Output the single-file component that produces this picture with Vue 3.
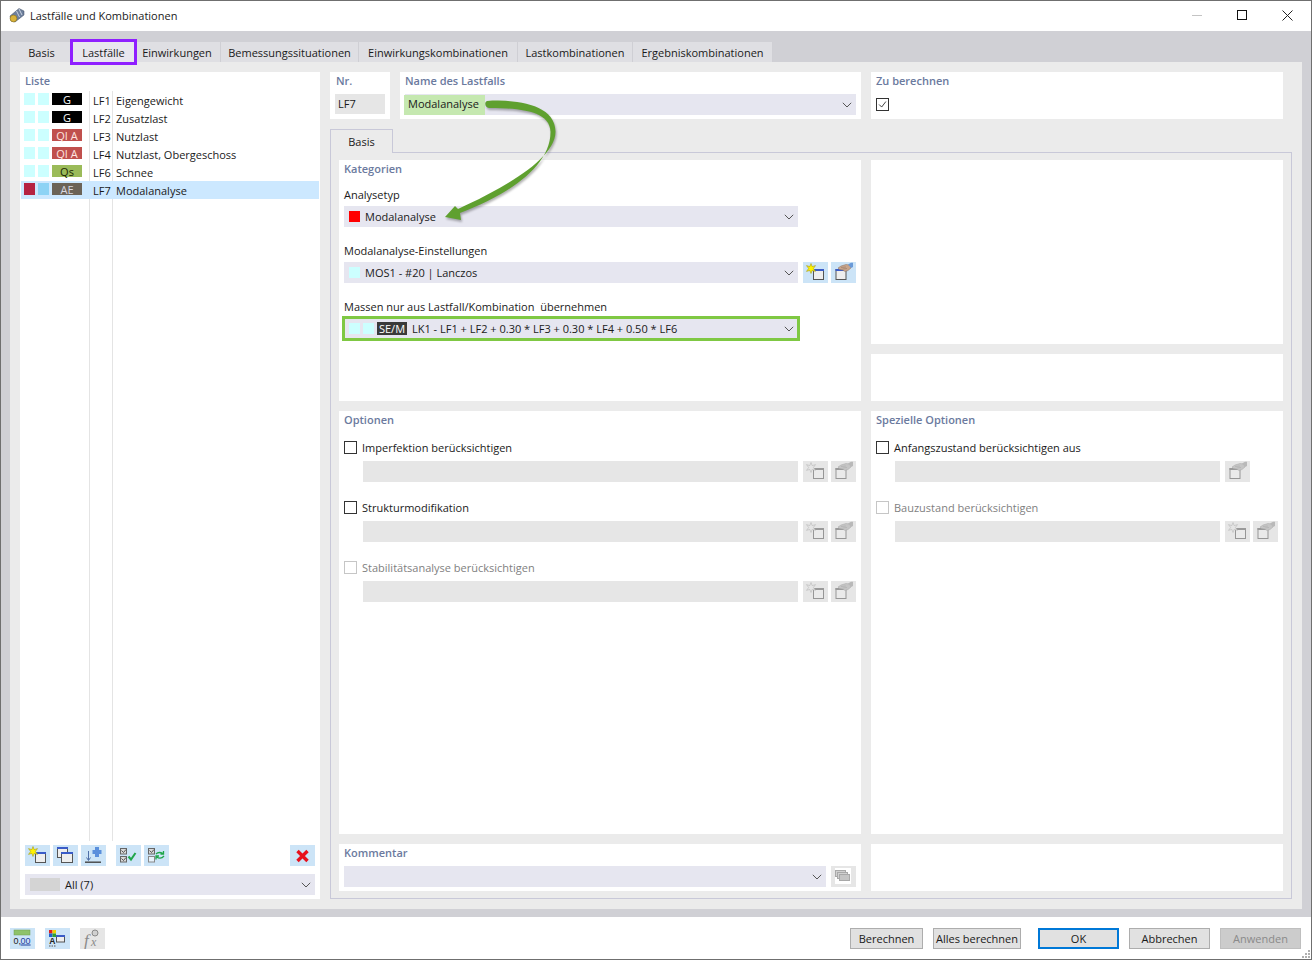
<script setup>
const tabs = [
  { label: "Basis", width: 63 },
  { label: "Lastfälle", width: 61, active: true },
  { label: "Einwirkungen", width: 87 },
  { label: "Bemessungssituationen", width: 138 },
  { label: "Einwirkungskombinationen", width: 159 },
  { label: "Lastkombinationen", width: 115 },
  { label: "Ergebniskombinationen", width: 140 },
];

const cases = [
  { a: "#ccffff", b: "#ccffff", code: "G", bg: "#000000", fg: "#ffffff", nr: "LF1", name: "Eigengewicht" },
  { a: "#ccffff", b: "#ccffff", code: "G", bg: "#000000", fg: "#ffffff", nr: "LF2", name: "Zusatzlast" },
  { a: "#ccffff", b: "#ccffff", code: "QI A", bg: "#c0504d", fg: "#ffe6e0", nr: "LF3", name: "Nutzlast" },
  { a: "#ccffff", b: "#ccffff", code: "QI A", bg: "#c0504d", fg: "#ffe6e0", nr: "LF4", name: "Nutzlast, Obergeschoss" },
  { a: "#ccffff", b: "#ccffff", code: "Qs", bg: "#9bbb59", fg: "#1a2600", nr: "LF6", name: "Schnee" },
  { a: "#b52242", b: "#8dd3f5", code: "AE", bg: "#6b6357", fg: "#d8d8e0", nr: "LF7", name: "Modalanalyse", selected: true },
];

const listTools = ["new", "copy", "import"];
const checkTools = ["check", "swap"];

const options = [
  { label: "Imperfektion berücksichtigen", icons: ["new", "edit"] },
  { label: "Strukturmodifikation", icons: ["new", "edit"] },
  { label: "Stabilitätsanalyse berücksichtigen", icons: ["new", "edit"], disabled: true },
];

const specials = [
  { label: "Anfangszustand berücksichtigen aus", icons: ["edit"] },
  { label: "Bauzustand berücksichtigen", icons: ["new", "edit"], disabled: true },
];

const footerButtons = [
  { label: "Berechnen", width: 73, gap: 10 },
  { label: "Alles berechnen", width: 88, gap: 17 },
  { label: "OK", width: 81, gap: 10, primary: true },
  { label: "Abbrechen", width: 81, gap: 10 },
  { label: "Anwenden", width: 81, gap: 0, disabled: true },
];
</script>

<template>
  <div class="window">
    <!-- gemeinsame Icons -->
    <svg class="defs" width="0" height="0">
      <symbol id="i-new" viewBox="0 0 25 21">
        <rect x="10.5" y="7.5" width="10" height="10" fill="#eeeeee" stroke="#555" />
        <rect x="10" y="7" width="11" height="2" fill="#3a5cc8" />
        <polygon points="8,1.5 9.2,4.6 12.5,3.6 10.4,6.5 12.5,9.4 9.2,8.4 8,11.5 6.8,8.4 3.5,9.4 5.6,6.5 3.5,3.6 6.8,4.6" fill="#fff200" stroke="#a39a20" stroke-width=".6" />
      </symbol>
      <symbol id="i-edit" viewBox="0 0 25 21">
        <rect x="5" y="7.5" width="10" height="10" fill="#eeeeee" stroke="#555" />
        <rect x="4.5" y="7" width="11" height="2" fill="#3a5cc8" />
        <path d="M7 6 L10 4 L15 2.5 L19 3 L20 6 L17 8.5 L14 9.5 L11.5 8 L8.5 7.5 Z" fill="#c8a58c" stroke="#8b6f5d" stroke-width=".5" />
        <path d="M10 5.5 L15 5 M11.5 7 L16 6.5" stroke="#8b6f5d" stroke-width=".5" fill="none" />
        <path d="M17 2.5 L20 .8 L22 .8 L22 5 L20 6 Z" fill="#6a9ad8" />
      </symbol>
      <symbol id="i-copy" viewBox="0 0 25 21">
        <rect x="4.5" y="2.5" width="10" height="10" fill="#eeeeee" stroke="#555" />
        <rect x="4" y="2" width="11" height="2" fill="#3a5cc8" />
        <rect x="8.5" y="7.5" width="11" height="10" fill="#eeeeee" stroke="#555" />
        <rect x="8" y="7" width="12" height="2" fill="#3a5cc8" />
      </symbol>
      <symbol id="i-import" viewBox="0 0 25 21">
        <path d="M11.5 5 H14 V2 H18 V5 H20.5 V9 H18 V12 H14 V9 H11.5 Z" fill="#5a8fdc" />
        <path d="M7.5 6 V15 M5.5 12.5 L7.5 15.5 L9.5 12.5" fill="none" stroke="#4f6fa8" stroke-width="1" />
        <rect x="4" y="16.5" width="16" height="1.4" fill="#444" />
      </symbol>
      <symbol id="i-check" viewBox="0 0 25 21">
        <rect x="4.5" y="3.5" width="6" height="5.5" fill="#d8d8d8" stroke="#666" />
        <rect x="4.5" y="11.5" width="6" height="5.5" fill="#d8d8d8" stroke="#666" />
        <path d="M5.5 5.5 L7.5 7.5 L10 4.5 M5.5 13.5 L7.5 15.5 L10 12.5" fill="none" stroke="#333" stroke-width=".8" />
        <path d="M12.5 11.5 L15 14.5 L19.5 8" fill="none" stroke="#1fa64a" stroke-width="2" />
      </symbol>
      <symbol id="i-swap" viewBox="0 0 25 21">
        <rect x="4.5" y="3.5" width="6" height="5.5" fill="#d8d8d8" stroke="#666" />
        <rect x="4.5" y="11.5" width="6" height="5.5" fill="#e6f2fb" stroke="#888" />
        <path d="M5.5 5.5 L7.5 7.5 L10 4.5" fill="none" stroke="#333" stroke-width=".8" />
        <path d="M12 9 C14 7 16 7 19 8.5 M19.5 6 V9 H16.5" fill="none" stroke="#1fa64a" stroke-width="1.3" />
        <path d="M20 11 C18 13.5 15 13.5 12.5 12 M12 14.5 V11 H15" fill="none" stroke="#1fa64a" stroke-width="1.3" />
      </symbol>
      <symbol id="i-delete" viewBox="0 0 25 21">
        <path d="M7.5 6 L17.5 16 M17.5 6 L7.5 16" fill="none" stroke="#e8101c" stroke-width="3.4" />
      </symbol>
      <symbol id="i-stack" viewBox="0 0 25 21">
        <rect x="4" y="2" width="16" height="16" fill="#fff" />
        <rect x="4.5" y="4.5" width="10" height="6" fill="#d0d0d0" stroke="#a8a8a8" />
        <rect x="6.5" y="6.5" width="10" height="6" fill="#d0d0d0" stroke="#a8a8a8" />
        <rect x="8.5" y="8.5" width="10" height="6" fill="#c4c4c4" stroke="#a8a8a8" />
      </symbol>
      <symbol id="i-chev" viewBox="0 0 10 6">
        <path d="M.8 .8 L5 5 L9.2 .8" fill="none" stroke="#555" stroke-width="1" />
      </symbol>
    </svg>

    <header class="titlebar">
      <svg class="app-icon" viewBox="0 0 16 16">
        <path d="M1 9 L10 1.5 L15 4 L15 8 L6 15 L2 14 Z" fill="#6d7f9c" stroke="#3d4a60" stroke-width=".5" />
        <path d="M10 2 L13 8 M7.5 4 L10.5 10" stroke="#c9d2e0" stroke-width="1" />
        <circle cx="4.5" cy="11.5" r="3.4" fill="#d9b23a" stroke="#7a6416" stroke-width=".5" />
      </svg>
      <span class="title">Lastfälle und Kombinationen</span>
      <div class="win-controls">
        <span class="win-min"></span>
        <span class="win-max"></span>
        <svg class="win-close" viewBox="0 0 11 11"><path d="M.5 .5 L10.5 10.5 M10.5 .5 L.5 10.5" stroke="#222" stroke-width="1" /></svg>
      </div>
    </header>

    <div class="body">
      <nav class="tabs">
        <div
          v-for="tab in tabs"
          :key="tab.label"
          class="tab"
          :class="{ active: tab.active }"
          :style="{ width: tab.width + 'px' }"
        >
          {{ tab.label }}
        </div>
      </nav>

      <main class="sheet">
        <!-- Liste der Lastfälle -->
        <aside class="card list-card">
          <div class="head">Liste</div>
          <div class="list">
            <div v-for="item in cases" :key="item.nr" class="row" :class="{ selected: item.selected }">
              <span class="sq" :style="{ background: item.a }"></span>
              <span class="sq" :style="{ background: item.b }"></span>
              <span class="code" :style="{ background: item.bg, color: item.fg }">{{ item.code }}</span>
              <span class="nr">{{ item.nr }}</span>
              <span class="name">{{ item.name }}</span>
            </div>
          </div>
          <div class="list-tools">
            <span v-for="ic in listTools" :key="ic" class="tool"><svg><use :href="'#i-' + ic" /></svg></span>
            <span class="tool-gap"></span>
            <span v-for="ic in checkTools" :key="ic" class="tool"><svg><use :href="'#i-' + ic" /></svg></span>
            <span class="tool tool-end"><svg><use href="#i-delete" /></svg></span>
          </div>
          <div class="combo list-filter">
            <span class="filter-chip"></span>
            <span>All (7)</span>
            <svg class="chev"><use href="#i-chev" /></svg>
          </div>
        </aside>

        <section class="detail">
          <div class="top-row">
            <div class="card nr-card">
              <div class="head">Nr.</div>
              <div class="input-plain">LF7</div>
            </div>
            <div class="card name-card">
              <div class="head">Name des Lastfalls</div>
              <div class="combo">
                <span class="name-chip">Modalanalyse</span>
                <svg class="chev"><use href="#i-chev" /></svg>
              </div>
            </div>
            <div class="card calc-card">
              <div class="head">Zu berechnen</div>
              <span class="box box-checked">
                <svg viewBox="0 0 13 13"><path d="M2.5 6.5 L5.5 9.5 L10.5 3" fill="none" stroke="#222" stroke-width="1" /></svg>
              </span>
            </div>
          </div>

          <div class="subtab">Basis</div>
          <div class="subpanel">
            <div class="grid">
              <div class="card kat-card">
                <div class="head">Kategorien</div>
                <div class="fields">
                  <div>
                    <div class="label">Analysetyp</div>
                    <div class="combo wide">
                      <span class="sq-combo" style="background: #ff0000"></span>
                      <span>Modalanalyse</span>
                      <svg class="chev"><use href="#i-chev" /></svg>
                    </div>
                  </div>
                  <div>
                    <div class="label">Modalanalyse-Einstellungen</div>
                    <div class="field-row">
                      <div class="combo wide">
                        <span class="sq-combo" style="background: #ccffff"></span>
                        <span>MOS1 - #20 | Lanczos</span>
                        <svg class="chev"><use href="#i-chev" /></svg>
                      </div>
                      <div class="tool-pair">
                        <span class="tool"><svg><use href="#i-new" /></svg></span>
                        <span class="tool"><svg><use href="#i-edit" /></svg></span>
                      </div>
                    </div>
                  </div>
                  <div>
                    <div class="label">Massen nur aus Lastfall/Kombination&nbsp; übernehmen</div>
                    <div class="combo wide marked">
                      <span class="sq-combo" style="background: #ccffff"></span>
                      <span class="sq-combo second" style="background: #ccffff"></span>
                      <span class="se-chip">SE/M</span>
                      <span>LK1 - LF1 + LF2 + 0.30 * LF3 + 0.30 * LF4 + 0.50 * LF6</span>
                      <svg class="chev"><use href="#i-chev" /></svg>
                    </div>
                  </div>
                </div>
              </div>

              <div class="right-stack">
                <div class="card blank-big"></div>
                <div class="card blank-small"></div>
              </div>

              <div class="card">
                <div class="head">Optionen</div>
                <div class="opts">
                  <div v-for="opt in options" :key="opt.label" class="opt" :class="{ disabled: opt.disabled }">
                    <label class="check"><span class="box"></span>{{ opt.label }}</label>
                    <div class="field-row indent">
                      <div class="input-off"></div>
                      <div class="tool-pair">
                        <span v-for="ic in opt.icons" :key="ic" class="tool off"><svg><use :href="'#i-' + ic" /></svg></span>
                      </div>
                    </div>
                  </div>
                </div>
              </div>

              <div class="card">
                <div class="head">Spezielle Optionen</div>
                <div class="opts">
                  <div v-for="opt in specials" :key="opt.label" class="opt" :class="{ disabled: opt.disabled }">
                    <label class="check"><span class="box"></span>{{ opt.label }}</label>
                    <div class="field-row indent">
                      <div class="input-off short"></div>
                      <div class="tool-pair">
                        <span v-for="ic in opt.icons" :key="ic" class="tool off"><svg><use :href="'#i-' + ic" /></svg></span>
                      </div>
                    </div>
                  </div>
                </div>
              </div>

              <div class="card comment-card">
                <div class="head">Kommentar</div>
                <div class="field-row">
                  <div class="combo comment-combo">
                    <svg class="chev"><use href="#i-chev" /></svg>
                  </div>
                  <div class="tool-pair">
                    <span class="tool off plain"><svg><use href="#i-stack" /></svg></span>
                  </div>
                </div>
              </div>
              <div class="card blank-small"></div>
            </div>
          </div>

          <!-- Pfeil aus der Vorlage, liegt über den Feldern -->
          <svg class="arrow" viewBox="0 0 130 130" width="130" height="130">
            <path
              d="M47 9 C75 7 116 12 115.5 40 C115 68 60 98 18 117 L15 114 L5 125 L21 128 L20 121 C65 104 110.5 76 110.5 40 C110.5 19 80 16 49 16 C45 16 44 10 47 9 Z"
              fill="#5fa02f"
            />
          </svg>
        </section>
      </main>
    </div>

    <footer class="footer">
      <span class="tool">
        <svg viewBox="0 0 25 21">
          <rect x="4" y="2" width="16" height="5" fill="#8ec26a" stroke="#6f9f50" stroke-width=".5" />
          <text x="3.6" y="15.5" font-size="9" font-family="'Liberation Sans', sans-serif" fill="#222">0,</text>
          <text x="10.6" y="15.5" font-size="9" font-family="'Liberation Sans', sans-serif" fill="#1d3fa0">00</text>
          <rect x="10.6" y="16.5" width="10" height="1" fill="#1d3fa0" />
        </svg>
      </span>
      <span class="tool">
        <svg viewBox="0 0 25 21">
          <rect x="4" y="2" width="3.5" height="3.5" fill="#e02020" />
          <rect x="7.5" y="2" width="3.5" height="3.5" fill="#f0d000" />
          <rect x="4" y="5.5" width="3.5" height="3.5" fill="#2060d0" />
          <rect x="7.5" y="5.5" width="3.5" height="3.5" fill="#30a030" />
          <text x="4.3" y="16" font-size="8.5" font-weight="700" font-family="'Liberation Sans', sans-serif" fill="#222">A</text>
          <path d="M4 18 h1.5 M6.5 18 h1.5 M9 18 h1.5" stroke="#555" />
          <rect x="11.5" y="7.5" width="8" height="6.5" fill="#eeeeee" stroke="#555" />
          <rect x="11" y="7" width="9" height="2" fill="#3a5cc8" />
        </svg>
      </span>
      <span class="tool off plain">
        <svg viewBox="0 0 25 21">
          <text x="4" y="18" font-size="17" font-style="italic" font-family="'Liberation Serif', serif" fill="#8a8a8a">f</text>
          <text x="11" y="18" font-size="12" font-style="italic" font-family="'Liberation Serif', serif" fill="#8a8a8a">x</text>
          <circle cx="15" cy="5" r="3" fill="#d0d0d0" stroke="#8a8a8a" />
        </svg>
      </span>
      <div class="actions">
        <button
          v-for="btn in footerButtons"
          :key="btn.label"
          class="btn"
          :class="{ primary: btn.primary, disabled: btn.disabled }"
          :style="{ width: btn.width + 'px', marginRight: btn.gap + 'px' }"
        >
          {{ btn.label }}
        </button>
      </div>
      <svg class="grip" viewBox="0 0 10 10">
        <path d="M7 1h2v2h-2zM4 4h2v2h-2zM7 4h2v2h-2zM1 7h2v2h-2zM4 7h2v2h-2zM7 7h2v2h-2z" fill="#b0b0b0" />
      </svg>
    </footer>
  </div>
</template>

<style>
html,
body {
  margin: 0;
  background: #ffffff;
}
</style>

<style scoped>
.window {
  width: 1312px;
  height: 960px;
  box-sizing: border-box;
  display: flex;
  flex-direction: column;
  border: 1px solid #6f6f6f;
  font-family: "Open Sans", "Liberation Sans", sans-serif;
  font-size: 11px;
  color: #1a1a1a;
  background: #ffffff;
  overflow: hidden;
}

.defs {
  position: absolute;
}

.titlebar {
  height: 30px;
  flex: none;
  box-sizing: border-box;
  display: flex;
  align-items: center;
  padding: 0 0 2px 8px;
  background: #ffffff;
}

.app-icon {
  width: 16px;
  height: 16px;
  margin-right: 5px;
}

.title {
  font-size: 11px;
}

.win-controls {
  margin-left: auto;
  display: flex;
  align-items: center;
}

.win-min {
  width: 10px;
  height: 1px;
  background: #c4c4c4;
  margin-right: 35px;
}

.win-max {
  width: 8px;
  height: 8px;
  border: 1px solid #111;
  margin-right: 35px;
}

.win-close {
  width: 11px;
  height: 11px;
  margin-right: 18px;
}

.body {
  flex: 1;
  display: flex;
  flex-direction: column;
  padding: 11px 9px 8px;
  background: #d0d0d5;
  min-height: 0;
}

.tabs {
  display: flex;
  height: 20px;
  flex: none;
}

.tab {
  box-sizing: border-box;
  display: flex;
  align-items: center;
  justify-content: center;
  padding-top: 1px;
  background: #dfdfe3;
  border-right: 1px solid #cfcfd4;
  white-space: nowrap;
}

.tab:first-child {
  padding-left: 1px;
}

.tab.active {
  background: #e8e6ee;
  border-right: 0;
  outline: 3px solid #8f1fff;
  position: relative;
}

.sheet {
  flex: 1;
  display: flex;
  gap: 10px;
  padding: 10px;
  background: #ebebeb;
  min-height: 0;
}

.card {
  background: #ffffff;
  padding: 2px 5px 0;
  box-sizing: border-box;
}

.head {
  height: 14px;
  line-height: 14px;
  font-weight: 600;
  color: #6b7a9e;
}

.list-card {
  width: 300px;
  flex: none;
  padding: 2px 0 4px;
  display: flex;
  flex-direction: column;
}

.list-card .head {
  padding-left: 5px;
}

.list {
  flex: 1;
  margin: 3px 1px 0;
  background:
    linear-gradient(#e4e4e4, #e4e4e4) 68px 0 / 1px 100% no-repeat,
    linear-gradient(#e4e4e4, #e4e4e4) 91px 0 / 1px 100% no-repeat;
}

.row {
  height: 18px;
  display: flex;
  padding-left: 3px;
}

.row.selected {
  background: #cce8ff;
}

.sq {
  width: 11px;
  height: 12px;
  margin: 2px 3px 0 0;
}

.code {
  width: 30px;
  height: 12px;
  margin-top: 2px;
  line-height: 14px;
  text-align: center;
  font-size: 11px;
}

.nr {
  width: 22px;
  margin-left: 7px;
  padding-left: 4px;
  box-sizing: border-box;
  line-height: 20px;
}

.name {
  padding-left: 4px;
  margin-left: 1px;
  line-height: 20px;
}

.list-tools {
  display: flex;
  gap: 3px;
  margin: 4px 5px 0;
}

.tool-gap {
  width: 4px;
}

.tool-end {
  margin-left: auto;
}

.tool {
  width: 25px;
  height: 21px;
  flex: none;
  background: #cce4f7;
  display: block;
}

.tool svg {
  width: 25px;
  height: 21px;
  display: block;
}

.tool.off {
  background: #e6e6e6;
}

.tool.off svg {
  filter: grayscale(1) opacity(0.55);
}

.tool.off.plain svg {
  filter: none;
}

.combo {
  height: 21px;
  box-sizing: border-box;
  display: flex;
  align-items: center;
  background: #e6e6f0;
}

.chev {
  width: 10px;
  height: 6px;
  margin-left: auto;
  margin-right: 4px;
  flex: none;
}

.list-filter {
  margin: 8px 5px 0;
  padding-left: 5px;
}

.filter-chip {
  width: 30px;
  height: 13px;
  margin-right: 5px;
  background: #d4d4d4;
}

.detail {
  flex: 1;
  display: flex;
  flex-direction: column;
  position: relative;
  min-width: 0;
}

.top-row {
  display: flex;
  gap: 10px;
  height: 47px;
  flex: none;
}

.nr-card {
  width: 60px;
}

.nr-card .head {
  padding-left: 1px;
}

.input-plain {
  height: 20px;
  margin-top: 6px;
  padding-left: 3px;
  line-height: 20px;
  background: #e6e6e6;
}

.name-card {
  width: 461px;
}

.name-card .combo {
  margin-top: 6px;
}

.name-chip {
  height: 20px;
  line-height: 18px;
  margin-left: -1px;
  padding: 0 6px 0 4px;
  width: 81px;
  box-sizing: border-box;
  background: #c5e8b0;
}

.calc-card {
  width: 412px;
}

.box {
  width: 13px;
  height: 13px;
  flex: none;
  box-sizing: border-box;
  display: block;
  border: 1px solid #333;
  background: #ffffff;
}

.box-checked {
  margin-top: 10px;
}

.box-checked svg {
  display: block;
  width: 11px;
  height: 11px;
}

.subtab {
  box-sizing: border-box;
  width: 63px;
  height: 24px;
  margin-top: 10px;
  margin-bottom: -1px;
  position: relative;
  z-index: 1;
  display: flex;
  align-items: center;
  justify-content: center;
  background: #ebebeb;
  border: 1px solid #c8c8d8;
  border-bottom: 0;
}

.subpanel {
  flex: 1;
  box-sizing: border-box;
  border: 1px solid #c8c8d8;
  padding: 7px 8px;
  min-height: 0;
}

.grid {
  height: 100%;
  display: grid;
  grid-template-columns: 522px 412px;
  grid-template-rows: 241px 1fr 47px;
  gap: 10px;
}

.fields {
  margin-top: 12px;
  display: flex;
  flex-direction: column;
  gap: 17px;
}

.label {
  height: 14px;
  line-height: 14px;
  margin-bottom: 4px;
}

.wide {
  width: 454px;
  flex: none;
}

.sq-combo {
  width: 11px;
  height: 11px;
  margin: 0 5px;
  flex: none;
}

.sq-combo.second {
  margin: 0 3px 0 -2px;
}

.se-chip {
  width: 30px;
  height: 13px;
  line-height: 13px;
  margin-right: 5px;
  text-align: center;
  background: #3a3a3a;
  color: #ffffff;
}

.marked {
  outline: 3px solid #7fc843;
  outline-offset: -1px;
}

.field-row {
  display: flex;
}

.tool-pair {
  display: flex;
  gap: 3px;
  margin-left: 5px;
}

.right-stack {
  display: flex;
  flex-direction: column;
  gap: 10px;
}

.blank-big {
  flex: 1;
}

.blank-small {
  height: 47px;
  flex: none;
}

.opts {
  margin-top: 13px;
  display: flex;
  flex-direction: column;
  gap: 18px;
}

.check {
  height: 14px;
  display: flex;
  align-items: center;
  gap: 5px;
  margin-bottom: 7px;
}

.disabled .check {
  color: #7f7f7f;
}

.disabled .box {
  border-color: #c6c6c6;
}

.indent {
  margin-left: 19px;
}

.input-off {
  width: 435px;
  height: 21px;
  flex: none;
  background: #e6e6e6;
}

.input-off.short {
  width: 325px;
}

.comment-card .field-row {
  margin-top: 6px;
}

.comment-combo {
  width: 482px;
  flex: none;
}

.arrow {
  position: absolute;
  left: 110px;
  top: 20px;
  filter: drop-shadow(1px 2px 1px rgba(0, 0, 0, 0.3));
  pointer-events: none;
}

.footer {
  height: 42px;
  flex: none;
  box-sizing: border-box;
  display: flex;
  align-items: center;
  gap: 10px;
  padding: 1px 10px 0 9px;
  background: #ffffff;
  position: relative;
}

.actions {
  margin-left: auto;
  display: flex;
}

.btn {
  height: 21px;
  box-sizing: border-box;
  padding: 0;
  font: inherit;
  color: #1a1a1a;
  background: #e1e1e1;
  border: 1px solid #adadad;
}

.btn.primary {
  border: 2px solid #0078d7;
}

.btn.disabled {
  color: #8a8a8a;
  background: #cccccc;
  border-color: #bfbfbf;
}

.grip {
  position: absolute;
  right: 0;
  bottom: 0;
  width: 10px;
  height: 10px;
}
</style>
